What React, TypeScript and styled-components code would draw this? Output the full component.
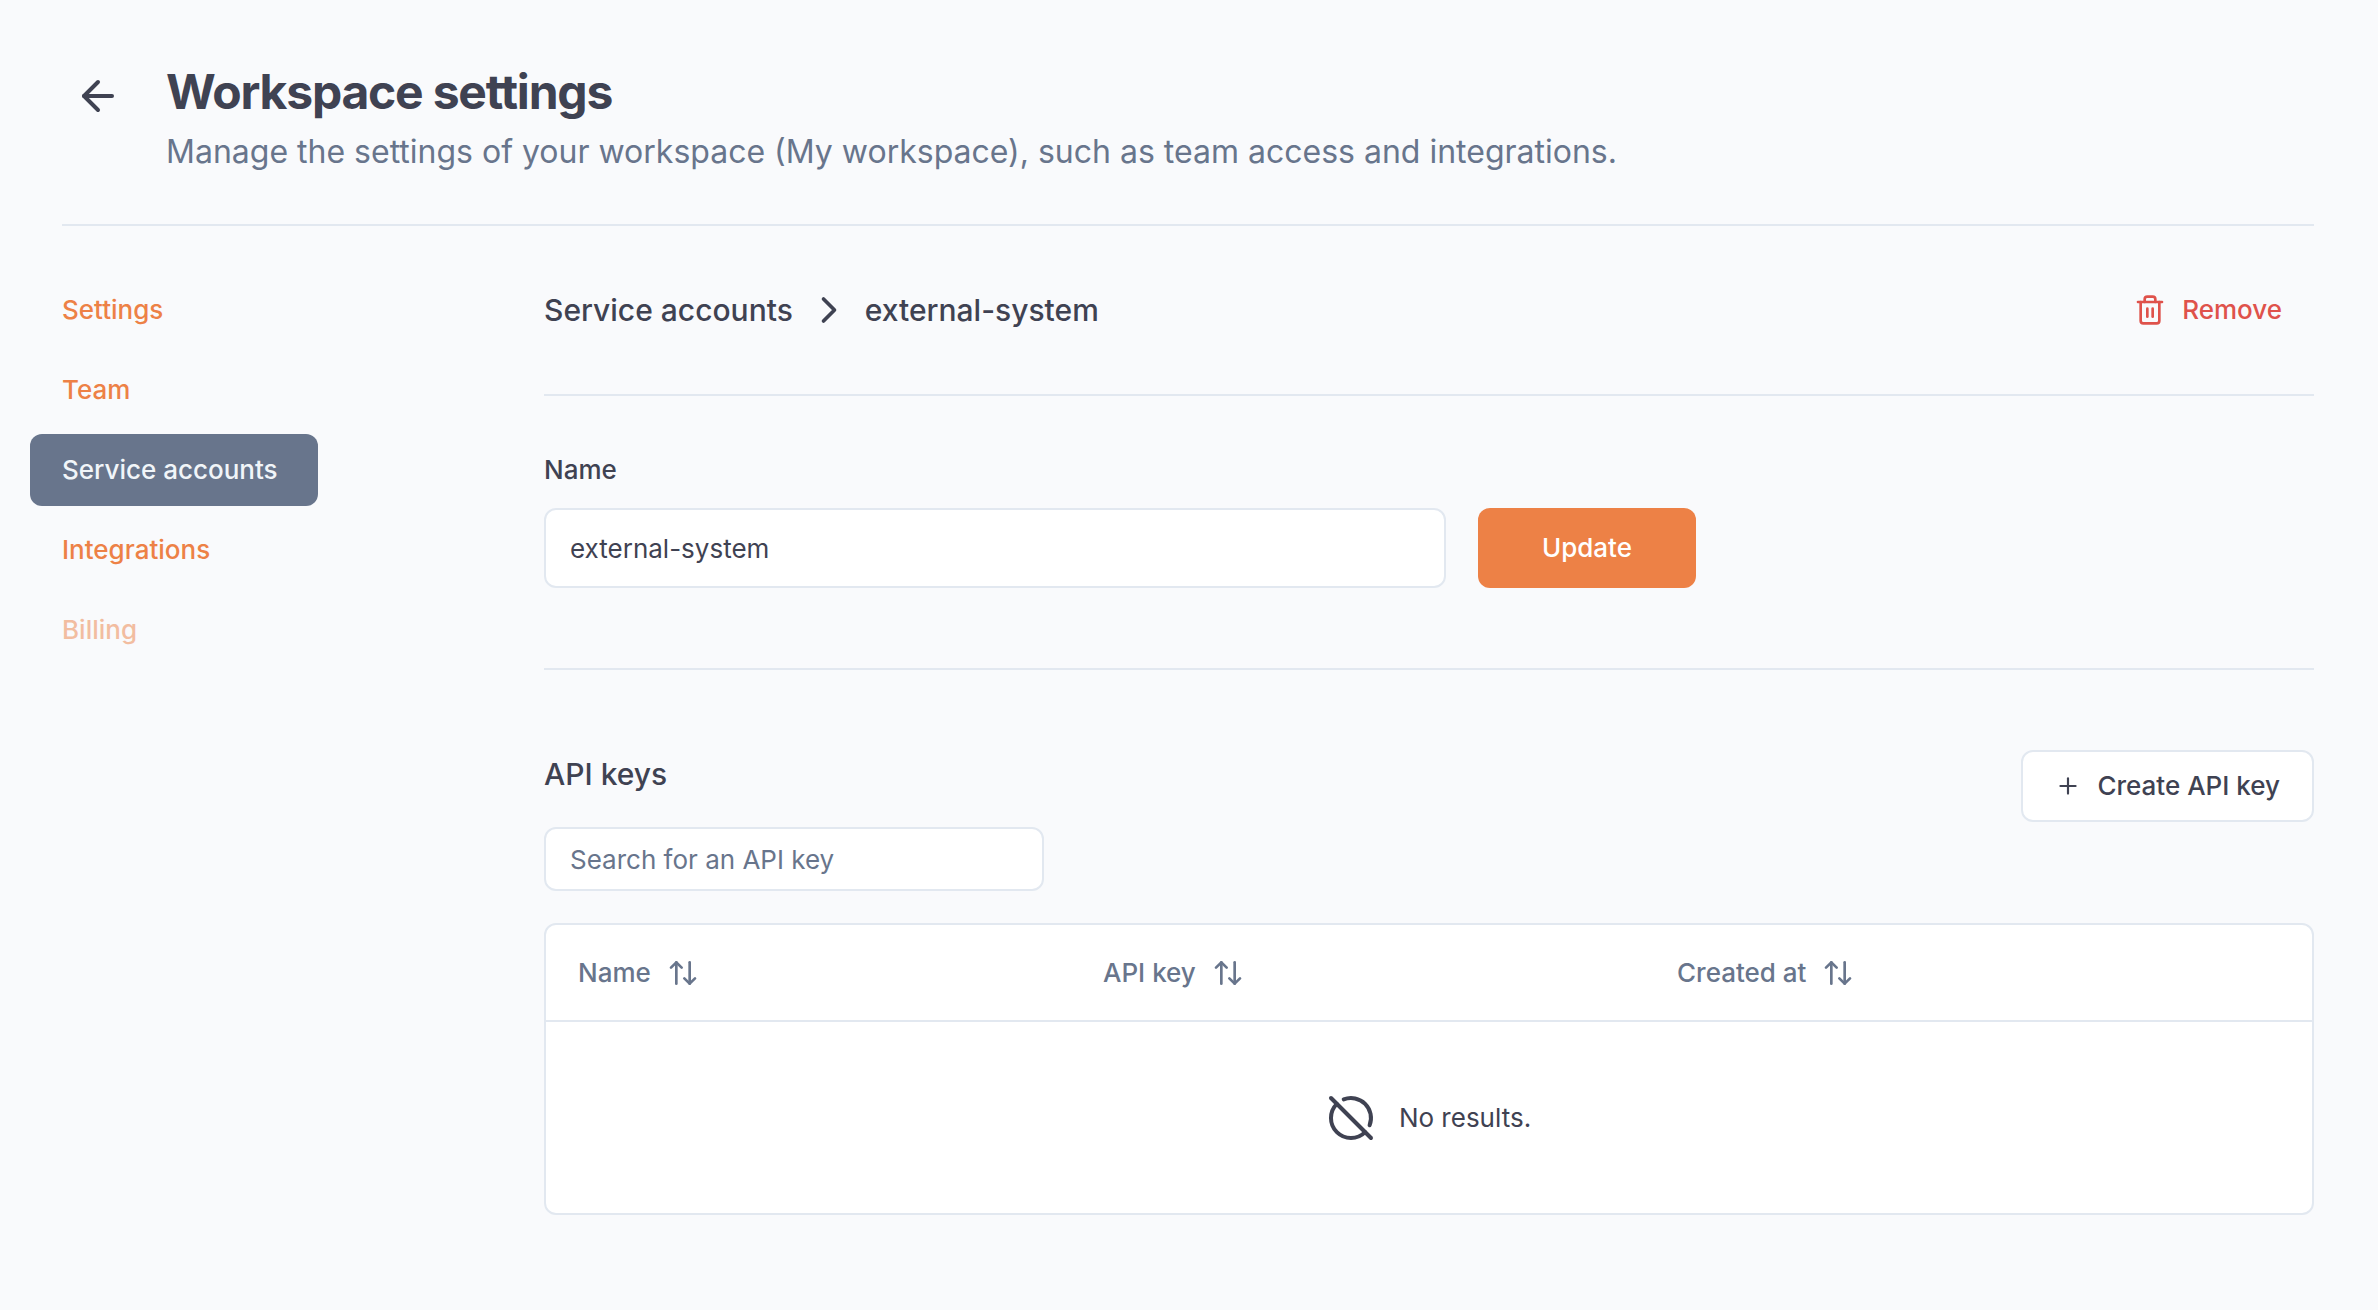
import React, { useState } from "react";
import styled, { createGlobalStyle, css } from "styled-components";
import {
  ArrowLeft,
  ArrowUpDown,
  ChevronRight,
  CircleOff,
  Plus,
  Trash2,
} from "lucide-react";

const color = {
  page: "#f9fafc",
  surface: "#ffffff",
  text: "#3f4252",
  muted: "#68758c",
  border: "#e2e8f0",
  accent: "#ed8146",
  danger: "#df524b",
  onDark: "#f1f5f9",
};

const GlobalStyle = createGlobalStyle`
  *, *::before, *::after { box-sizing: border-box; }
  body {
    margin: 0;
    background: ${color.page};
    color: ${color.text};
    font-family: Inter, "Liberation Sans", sans-serif;
    font-size: 26px;
    line-height: 40px;
    -webkit-font-smoothing: antialiased;
  }
  h1, h2, p { margin: 0; }
  button, input { font: inherit; color: inherit; }
  svg { flex: none; }
`;

const Page = styled.div`
  padding: 60px 64px 94px 62px;
`;

const Header = styled.header`
  display: flex;
  align-items: flex-start;
  gap: 32px;
  padding-bottom: 48px;
  border-bottom: 2px solid ${color.border};
`;

const BackButton = styled.button`
  display: flex;
  padding: 12px;
  border: 0;
  background: none;
  cursor: pointer;
`;

const HeaderText = styled.div`
  display: flex;
  flex-direction: column;
  gap: 4px;
`;

const Title = styled.h1`
  font-size: 48px;
  line-height: 64px;
  font-weight: 700;
  letter-spacing: -0.025em;
`;

const Subtitle = styled.p`
  color: ${color.muted};
  font-size: 32px;
  line-height: 48px;
`;

const Body = styled.div`
  display: flex;
  gap: 226px;
  padding-top: 48px;
`;

const Nav = styled.nav`
  display: flex;
  flex-direction: column;
  gap: 8px;
  flex: none;
  width: 288px;
  margin-left: -32px;
`;

const NavLink = styled.a<{ $active?: boolean; $disabled?: boolean }>`
  padding: 16px 32px;
  border-radius: 12px;
  color: ${color.accent};
  font-weight: 500;
  text-decoration: none;
  ${(p) =>
    p.$active &&
    css`
      background: ${color.muted};
      color: ${color.onDark};
    `}
  ${(p) => p.$disabled && "opacity: 0.5;"}
`;

const Main = styled.main`
  flex: 1;
  min-width: 0;
`;

const Section = styled.section<{ $divided?: boolean }>`
  ${(p) => p.$divided && `border-bottom: 2px solid ${color.border};`}
`;

const TopBar = styled(Section)`
  display: flex;
  align-items: center;
  justify-content: space-between;
  padding-bottom: 48px;
`;

const Breadcrumb = styled.div`
  display: flex;
  align-items: center;
  gap: 14px;
  font-size: 30px;
  font-weight: 500;
`;

const CrumbLink = styled.a`
  color: inherit;
  text-decoration: none;
`;

const Heading = styled.h2`
  font-size: 30px;
  line-height: 48px;
  font-weight: 500;
`;

const Button = styled.button<{ $variant: "primary" | "outline" | "danger" }>`
  display: flex;
  align-items: center;
  gap: 16px;
  height: 72px;
  padding: 0 32px;
  border: 0;
  border-radius: 12px;
  background: none;
  font-weight: 500;
  cursor: pointer;
  ${(p) =>
    p.$variant === "primary" &&
    css`
      height: 80px;
      padding: 0 64px;
      background: ${color.accent};
      color: ${color.surface};
    `}
  ${(p) =>
    p.$variant === "outline" &&
    css`
      border: 2px solid ${color.border};
      background: ${color.surface};
    `}
  ${(p) => p.$variant === "danger" && `color: ${color.danger};`}
`;

const NameSection = styled(Section)`
  padding: 54px 0 80px;
`;

const Label = styled.label`
  display: block;
  margin-bottom: 18px;
  font-weight: 500;
`;

const NameRow = styled.div`
  display: flex;
  gap: 32px;
  max-width: 1152px;
`;

const TextInput = styled.input<{ $compact?: boolean }>`
  flex: ${(p) => (p.$compact ? "none" : "1")};
  min-width: 0;
  height: ${(p) => (p.$compact ? 64 : 80)}px;
  padding: 0 24px;
  border: 2px solid ${color.border};
  border-radius: 12px;
  background: ${color.surface};
  outline: none;
  &::placeholder {
    color: ${color.muted};
    opacity: 1;
  }
`;

const KeysSection = styled(Section)`
  padding-top: 80px;
`;

const KeysHeader = styled.div`
  display: flex;
  align-items: flex-start;
  justify-content: space-between;
  margin-bottom: 32px;
`;

const SearchGroup = styled.div`
  display: flex;
  flex-direction: column;
  gap: 29px;
  width: 500px;
`;

const TableFrame = styled.div`
  border: 2px solid ${color.border};
  border-radius: 12px;
  background: ${color.surface};
`;

const Table = styled.table`
  width: 100%;
  table-layout: fixed;
  border-collapse: collapse;
`;

const HeadCell = styled.th<{ $width: number }>`
  width: ${(p) => p.$width}px;
  height: 96px;
  padding: 0 32px;
  border-bottom: 2px solid ${color.border};
  color: ${color.muted};
  font-weight: 500;
  text-align: left;
`;

const SortButton = styled.button`
  display: flex;
  align-items: center;
  gap: 16px;
  padding: 0;
  border: 0;
  background: none;
  white-space: nowrap;
  cursor: pointer;
`;

const EmptyCell = styled.td`
  height: 192px;
  padding: 0 32px;
`;

const EmptyMessage = styled.div`
  display: flex;
  align-items: center;
  justify-content: center;
  gap: 24px;
`;

const navItems = [
  { label: "Settings" },
  { label: "Team" },
  { label: "Service accounts", active: true },
  { label: "Integrations" },
  { label: "Billing", disabled: true },
];

// The fixed table layout scales these widths in proportion to fill the row.
const columns = [
  { label: "Name", width: 525 },
  { label: "API key", width: 574 },
  { label: "Created at", width: 667 },
];

export default function App() {
  const [name, setName] = useState("external-system");
  const [query, setQuery] = useState("");

  return (
    <>
      <GlobalStyle />
      <Page>
        <Header>
          <BackButton type="button" aria-label="Back">
            <ArrowLeft size={48} />
          </BackButton>
          <HeaderText>
            <Title>Workspace settings</Title>
            <Subtitle>
              Manage the settings of your workspace (My workspace), such as team
              access and integrations.
            </Subtitle>
          </HeaderText>
        </Header>
        <Body>
          <Nav aria-label="Workspace settings">
            {navItems.map((item) => (
              <NavLink
                key={item.label}
                href="#"
                $active={item.active}
                $disabled={item.disabled}
                aria-current={item.active ? "page" : undefined}
                aria-disabled={item.disabled}
              >
                {item.label}
              </NavLink>
            ))}
          </Nav>
          <Main>
            <TopBar $divided>
              <Breadcrumb>
                <CrumbLink href="#">Service accounts</CrumbLink>
                <ChevronRight size={44} />
                <span>external-system</span>
              </Breadcrumb>
              <Button type="button" $variant="danger">
                <Trash2 size={32} />
                Remove
              </Button>
            </TopBar>
            <NameSection $divided>
              <Label htmlFor="account-name">Name</Label>
              <NameRow>
                <TextInput
                  id="account-name"
                  value={name}
                  onChange={(e) => setName(e.target.value)}
                />
                <Button type="button" $variant="primary">
                  Update
                </Button>
              </NameRow>
            </NameSection>
            <KeysSection>
              <KeysHeader>
                <SearchGroup>
                  <Heading>API keys</Heading>
                  <TextInput
                    $compact
                    type="text"
                    aria-label="Search for an API key"
                    placeholder="Search for an API key"
                    value={query}
                    onChange={(e) => setQuery(e.target.value)}
                  />
                </SearchGroup>
                <Button type="button" $variant="outline">
                  <Plus size={26} />
                  Create API key
                </Button>
              </KeysHeader>
              <TableFrame>
                <Table>
                  <thead>
                    <tr>
                      {columns.map((column) => (
                        <HeadCell
                          key={column.label}
                          scope="col"
                          $width={column.width}
                        >
                          <SortButton type="button">
                            {column.label}
                            <ArrowUpDown size={32} />
                          </SortButton>
                        </HeadCell>
                      ))}
                    </tr>
                  </thead>
                  <tbody>
                    <tr>
                      <EmptyCell colSpan={columns.length}>
                        <EmptyMessage>
                          <CircleOff size={48} />
                          No results.
                        </EmptyMessage>
                      </EmptyCell>
                    </tr>
                  </tbody>
                </Table>
              </TableFrame>
            </KeysSection>
          </Main>
        </Body>
      </Page>
    </>
  );
}
